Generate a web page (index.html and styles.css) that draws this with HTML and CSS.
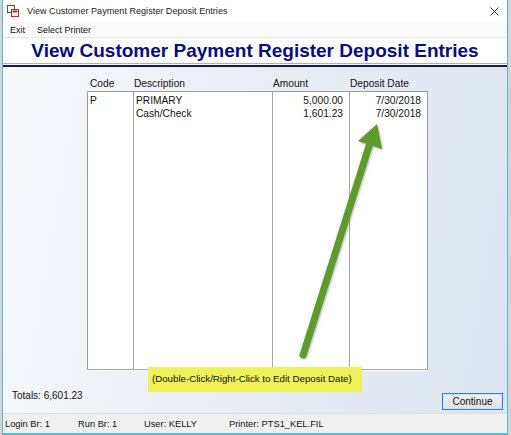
FILE: index.html
```html
<!DOCTYPE html>
<html lang="en">
<head>
    <meta charset="UTF-8">
    <title>View Customer Payment Register Deposit Entries</title>
    <link rel="stylesheet" href="styles.css">
</head>
<body>

<div class="janela">
    <div class="titulo">
        <svg class="icone" width="12" height="12" viewBox="0 0 12 12">
            <rect x="0.5" y="0.5" width="7" height="7" fill="#fff" stroke="#555"/>
            <rect x="4.5" y="4.5" width="7" height="7" fill="#fff" stroke="#c0282d"/>
            <rect x="5.5" y="5.5" width="5" height="2" fill="#c0282d"/>
        </svg>
        <span>View Customer Payment Register Deposit Entries</span>
        <svg class="fechar" width="9" height="9" viewBox="0 0 9 9">
            <path d="M0.5 0.5 L8.5 8.5 M8.5 0.5 L0.5 8.5" stroke="#333" stroke-width="1"/>
        </svg>
    </div>

    <div class="menu">
        <span>Exit</span>
        <span>Select Printer</span>
    </div>

    <h1 class="cabecalho">View Customer Payment Register Deposit Entries</h1>
    <div class="linha"></div>

    <div class="conteudo">
        <div class="colunas">
            <span>Code</span>
            <span>Description</span>
            <span>Amount</span>
            <span>Deposit Date</span>
        </div>

        <div class="lista">
            <div class="col">
                <div>P</div>
            </div>
            <div class="col">
                <div>PRIMARY</div>
                <div>Cash/Check</div>
            </div>
            <div class="col num">
                <div>5,000.00</div>
                <div>1,601.23</div>
            </div>
            <div class="col num data">
                <div>7/30/2018</div>
                <div>7/30/2018</div>
            </div>
        </div>

        <div class="aviso">(Double-Click/Right-Click to Edit Deposit Date)</div>

        <div class="rodape">
            <span class="totais">Totals: 6,601.23</span>
            <button class="botao">Continue</button>
        </div>

        <!-- seta de destaque apontando para a data -->
        <svg class="seta" width="504" height="434" viewBox="0 0 504 434">
            <line x1="300" y1="355" x2="366" y2="146" stroke="#5d9c2c" stroke-width="7" stroke-linecap="round"/>
            <polygon points="374,124 355,141 379,149" fill="#5d9c2c"/>
        </svg>
    </div>

    <div class="status">
        <span>Login Br: 1</span>
        <span>Run Br: 1</span>
        <span>User: KELLY</span>
        <span>Printer: PTS1_KEL.FIL</span>
    </div>
</div>

</body>
</html>
```

FILE: styles.css
```css
body {
    margin: 0;
    background-color: #d3d6d9;
    font-family: "Liberation Sans", Arial, sans-serif;
    color: #111;
}
.janela {
    position: relative;
    margin-left: 2px;
    width: 506px;
    box-sizing: border-box;
    border: 1px solid #5ab8ca;
    border-top: none;
    background-color: #fff;
}
.titulo {
    height: 22px;
    display: flex;
    align-items: center;
    padding-left: 4px;
    font-size: 9.1px;
    color: #222;
}
.icone {
    margin-right: 8px;
}
.fechar {
    margin-left: auto;
    margin-right: 8px;
}
.menu {
    height: 15px;
    display: flex;
    align-items: center;
    gap: 12px;
    padding-left: 7px;
    font-size: 9px;
    background-color: #fbfbfb;
    border-bottom: 1px solid #e8e8e8;
}
.cabecalho {
    margin: 0;
    height: 25px;
    line-height: 25px;
    text-align: center;
    font-size: 19px;
    font-weight: bold;
    color: #0b0b80;
    border-bottom: 1px solid #b0b0b0;
}
.linha {
    margin-top: 1px;
    height: 2px;
    background-color: #14146e;
}
.conteudo {
    height: 346px;
    box-sizing: border-box;
    padding-top: 10px;
    background: linear-gradient(100deg, #f6f8fb 0%, #e9eef5 50%, #dbe4ef 100%);
}
.colunas,
.lista {
    margin-left: 84px;
    width: 341px;
    display: grid;
    grid-template-columns: 45px 139px 77px 1fr;
    box-sizing: border-box;
    font-size: 10.2px;
}
.colunas {
    height: 14px;
    line-height: 13px;
}
.colunas span {
    padding-left: 2px;
}
.colunas span:first-child {
    padding-left: 3px;
}
.lista {
    height: 279px;
    background-color: #fff;
    border: 1px solid #9c9c9c;
    border-bottom-color: #a8a8a8;
    box-shadow: 0 1px 0 #fff;
}
.col {
    padding: 3px 2px 0 2px;
    line-height: 12.5px;
    border-left: 1px solid #a6a6a6;
}
.col:first-child {
    border-left: none;
}
.num {
    text-align: right;
    padding-right: 6px;
}
.data {
    padding-right: 6px;
}
.aviso {
    position: relative;
    z-index: 1;
    margin: -3px 0 -3px 145px;
    width: 214px;
    height: 25px;
    box-sizing: border-box;
    padding-left: 4px;
    line-height: 23px;
    font-size: 9.7px;
    background-color: #eff05a;
}
.rodape {
    height: 24px;
    display: flex;
    align-items: flex-start;
    justify-content: space-between;
    padding: 0 4px 0 9px;
}
.totais {
    font-size: 10px;
    line-height: 13px;
}
.botao {
    margin-top: 4px;
    width: 61px;
    height: 17px;
    padding: 0;
    font-family: "Liberation Sans", Arial, sans-serif;
    font-size: 10px;
    color: #111;
    background: linear-gradient(#f0f0f0, #e2e2e2);
    border: 1px solid #2f7fd0;
    box-shadow: inset 0 0 0 1px #cfe3f7;
}
.seta {
    position: absolute;
    left: 0;
    top: 0;
    pointer-events: none;
    filter: drop-shadow(1px 1px 1px rgba(0, 0, 0, 0.3));
}
.status {
    height: 19px;
    display: grid;
    grid-template-columns: 73px 66px 85px auto;
    align-items: center;
    padding-left: 2px;
    font-size: 9.3px;
    background-color: #f0f0f0;
    border-top: 1px solid #dedede;
    border-bottom: 1px solid #5ab8ca;
}
```
